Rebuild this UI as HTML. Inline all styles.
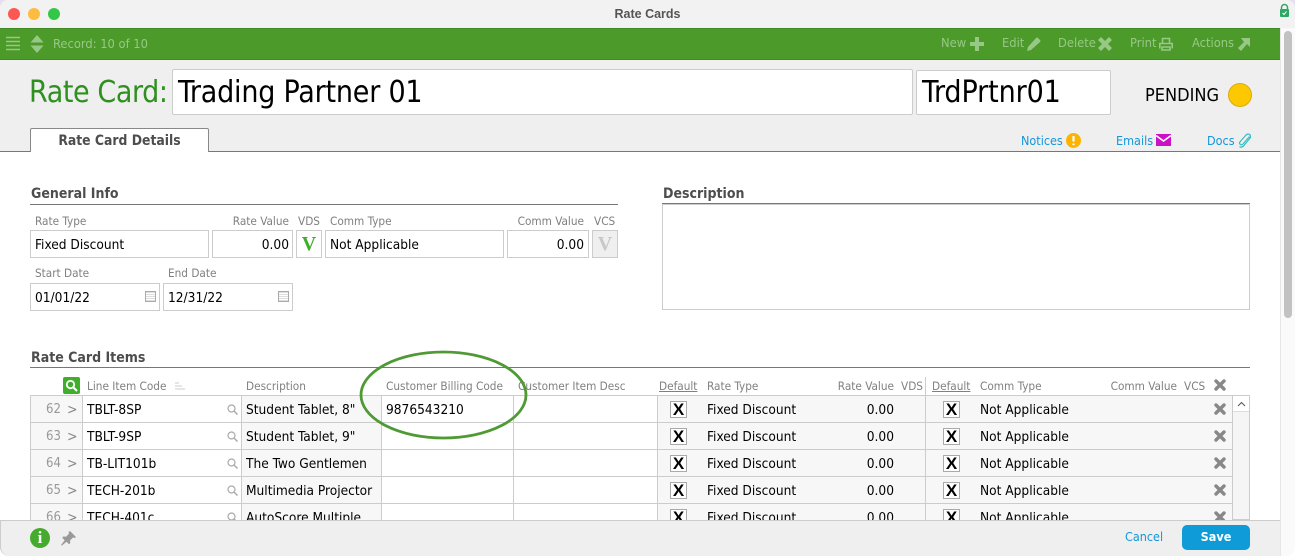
<!DOCTYPE html>
<html><head><meta charset="utf-8">
<style>
html,body{margin:0;padding:0;width:1295px;height:556px;overflow:hidden;background:#fff}
body{position:relative;font-family:"DejaVu Sans Condensed","DejaVu Sans","Liberation Sans",sans-serif;font-stretch:condensed;font-size:13.6px;color:#000}
.a,.t,.b{position:absolute}
.t{white-space:nowrap;line-height:16px}
.b{box-sizing:border-box;border:1px solid #ccc;background:#fff}
.lab{font-size:11.7px;color:#808080}
.bar{font-size:12.8px;color:#98c886}
.blue{font-size:12.5px;color:#1497d9}
.h{font-weight:bold;font-size:14px;color:#4d4d4d}
.hr{position:absolute;height:1px;background:#777}
.r{text-align:right}
.row{position:absolute;left:30px;width:1203px;height:27px;box-sizing:border-box;border-top:1px solid #ccc;background:#f7f7f7}
.row .c{position:absolute;top:0;height:26px;background:#fff}
.row .l{position:absolute;top:0;width:1px;height:26px;background:#ccc}
.row .t{top:6px}
.row .n{color:#999;font-size:13px;left:16px}
.row .g{color:#888;font-size:14px;left:37px}
.cb{position:absolute;top:5px;width:17px;height:17px;box-sizing:border-box;border:1px solid #aaa;background:#fff}
.row .x{width:17px;text-align:center;top:6px;font-family:"Liberation Sans",sans-serif;font-stretch:normal;font-weight:bold;font-size:17px;line-height:16px}
.title{font-size:30px;line-height:38px}
</style></head><body>
<!-- title bar -->
<div class="a" style="left:0;top:0;width:1295px;height:28px;background:#e6e0ee"></div>
<div class="a" style="left:0;top:0;width:1295px;height:28px;background:#f2f2f2;border-radius:8px 8px 0 0"></div>
<div class="a" style="left:8px;top:8px;width:12px;height:12px;border-radius:50%;background:#fc5753"></div>
<div class="a" style="left:28px;top:8px;width:12px;height:12px;border-radius:50%;background:#fdbc40"></div>
<div class="a" style="left:48px;top:8px;width:12px;height:12px;border-radius:50%;background:#33c748"></div>
<div class="t" style="left:0;width:1295px;text-align:center;top:6px;font-family:'Liberation Sans',sans-serif;font-stretch:normal;font-size:12.5px;font-weight:bold;color:#555">Rate Cards</div>
<svg class="a" style="left:1279px;top:3px" width="11" height="15" viewBox="0 0 11 15"><path d="M2.500 7V4.500a3 3 0 0 1 6 0V7" fill="none" stroke="#2fa866" stroke-width="1.500"/><rect x="1" y="6" width="9" height="8" rx="1" fill="#2fa866"/><path d="M3.500 10l1.500 1.500 2.500-3" fill="none" stroke="#fff" stroke-width="1"/></svg>
<!-- toolbar -->
<div class="a" style="left:0;top:28px;width:1280px;height:32px;background:#4c9a2a;border-top:1px solid #3f8a22;border-bottom:1px solid #3f8a22;box-sizing:border-box"></div>
<svg class="a" style="left:6px;top:36px" width="15" height="15"><path d="M0 1.500h14M0 5.500h14M0 9.500h14M0 13.500h14" stroke="#98c886" stroke-width="1.600"/></svg>
<svg class="a" style="left:30px;top:35px" width="14" height="18"><path d="M7 0l6.500 7.500H.5zM7 18l6.500-7.500H.5z" fill="#98c886"/></svg>
<div class="t bar" style="left:53px;top:37px">Record: 10 of 10</div>
<div class="t bar" style="left:941px;top:36px">New</div>
<svg class="a" style="left:970px;top:37px" width="14" height="14"><path d="M5 0h4v5h5v4H9v5H5V9H0V5h5z" fill="#98c886"/></svg>
<div class="t bar" style="left:1002px;top:36px">Edit</div>
<svg class="a" style="left:1027px;top:37px" width="14" height="14"><path d="M0 14l1-4 8-9q1-1 2 0l2 2q1 1 0 2l-9 8z" fill="#98c886"/></svg>
<div class="t bar" style="left:1058px;top:36px">Delete</div>
<svg class="a" style="left:1098px;top:37px" width="14" height="14"><path d="M3 0l4 4 4-4 3 3-4 4 4 4-3 3-4-4-4 4-3-3 4-4-4-4z" fill="#98c886"/></svg>
<div class="t bar" style="left:1130px;top:36px">Print</div>
<svg class="a" style="left:1159px;top:37px" width="14" height="14"><path d="M3.500 6V1.500h7V6M.8 11.500V6.500h12.400v5M3 10h8v3H3z" fill="none" stroke="#98c886" stroke-width="1.600"/></svg>
<div class="t bar" style="left:1192px;top:36px">Actions</div>
<svg class="a" style="left:1237px;top:37px" width="14" height="14"><path d="M4 1h9v9l-3-3-6 7-3-3 6-6z" fill="#98c886"/></svg>
<!-- header -->
<div class="a" style="left:0;top:60px;width:1280px;height:91px;background:#efefef"></div>
<div class="t title" style="left:29px;top:74px;color:#2f9020;letter-spacing:-.4px">Rate Card:</div>
<div class="b" style="left:172px;top:69px;width:741px;height:46px;border-radius:2px"></div>
<div class="t title" style="left:178px;top:74px;letter-spacing:-.2px">Trading Partner 01</div>
<div class="b" style="left:916px;top:70px;width:195px;height:45px;border-radius:2px"></div>
<div class="t title" style="left:922px;top:74px;letter-spacing:-.1px">TrdPrtnr01</div>
<div class="t" style="left:1145px;top:88px;font-size:18px">PENDING</div>
<div class="a" style="left:1228px;top:83px;width:24px;height:24px;box-sizing:border-box;border-radius:50%;background:#fdc800;border:1px solid #d9ac10"></div>
<!-- tabs -->
<div class="a" style="left:30px;top:128px;width:179px;height:24px;box-sizing:border-box;background:#fff;border:1px solid #888;border-bottom:0;border-radius:2px 2px 0 0;z-index:2"></div>
<div class="t" style="left:30px;width:179px;text-align:center;top:133px;font-size:13.8px;font-weight:bold;color:#4d4d4d;z-index:3">Rate Card Details</div>
<div class="hr" style="left:0;top:151px;width:1280px"></div>
<div class="t blue" style="left:1021px;top:133px">Notices</div>
<svg class="a" style="left:1066px;top:133px" width="15" height="15"><circle cx="7.500" cy="7.500" r="7.500" fill="#fdb300"/><path d="M7.500 3v5.500M7.500 10.500v1.600" stroke="#fff" stroke-width="2.200"/></svg>
<div class="t blue" style="left:1116px;top:133px">Emails</div>
<svg class="a" style="left:1156px;top:134px" width="15" height="12"><rect width="15" height="12" fill="#cc10c8"/><path d="M0 1.500L7.500 7 15 1.500" fill="none" stroke="#fff" stroke-width="1.600"/></svg>
<div class="t blue" style="left:1207px;top:133px">Docs</div>
<svg class="a" style="left:1238px;top:133px" width="13" height="15" viewBox="0 0 13 15"><path d="M11.500 3.500L5 11q-1.500 1.500-2.800.4t0-2.800L8 2q2-1.800 3.700-.4t.2 3.700L5.500 13q-2.200 2-4 .6" fill="none" stroke="#35bdc0" stroke-width="1.200"/></svg>
<!-- general -->
<div class="t h" style="left:31px;top:186px">General Info</div>
<div class="hr" style="left:30px;top:204px;width:588px"></div>
<div class="t lab" style="left:35px;top:213px">Rate Type</div>
<div class="t lab r" style="left:212px;width:77px;top:213px">Rate Value</div>
<div class="t lab" style="left:298px;top:213px">VDS</div>
<div class="t lab" style="left:330px;top:213px">Comm Type</div>
<div class="t lab r" style="left:507px;width:77px;top:213px">Comm Value</div>
<div class="t lab" style="left:594px;top:213px">VCS</div>
<div class="b" style="left:30px;top:230px;width:179px;height:28px"></div>
<div class="t" style="left:35px;top:237px">Fixed Discount</div>
<div class="b" style="left:212px;top:230px;width:81px;height:28px"></div>
<div class="t r" style="left:212px;width:77px;top:237px">0.00</div>
<div class="b" style="left:296px;top:230px;width:26px;height:28px"></div>
<div class="t" style="left:296px;width:26px;text-align:center;top:234px;font-family:'Liberation Serif',serif;font-stretch:normal;font-weight:bold;font-size:20px;line-height:20px;color:#3fae2a">V</div>
<div class="b" style="left:325px;top:230px;width:179px;height:28px"></div>
<div class="t" style="left:330px;top:237px">Not Applicable</div>
<div class="b" style="left:507px;top:230px;width:82px;height:28px"></div>
<div class="t r" style="left:507px;width:77px;top:237px">0.00</div>
<div class="b" style="left:592px;top:230px;width:26px;height:28px;background:#efefef"></div>
<div class="t" style="left:592px;width:26px;text-align:center;top:234px;font-family:'Liberation Serif',serif;font-stretch:normal;font-weight:bold;font-size:20px;line-height:20px;color:#c8c8c8">V</div>
<div class="t lab" style="left:35px;top:265px">Start Date</div>
<div class="t lab" style="left:168px;top:265px">End Date</div>
<div class="b" style="left:30px;top:283px;width:130px;height:28px"></div>
<div class="t" style="left:35px;top:290px">01/01/22</div>
<div class="a" style="left:145px;top:291px;width:9px;height:9px;border:1px solid #aaa;background:repeating-linear-gradient(0deg,#ddd 0 1px,#fff 1px 2px)"></div>
<div class="b" style="left:163px;top:283px;width:130px;height:28px"></div>
<div class="t" style="left:168px;top:290px">12/31/22</div>
<div class="a" style="left:278px;top:291px;width:9px;height:9px;border:1px solid #aaa;background:repeating-linear-gradient(0deg,#ddd 0 1px,#fff 1px 2px)"></div>
<!-- description -->
<div class="t h" style="left:663px;top:186px">Description</div>
<div class="b" style="left:662px;top:204px;width:588px;height:106px;border-color:#ccc"></div>
<div class="hr" style="left:662px;top:203px;width:588px"></div>
<!-- items -->
<div class="t h" style="left:31px;top:350px">Rate Card Items</div>
<div class="hr" style="left:30px;top:367px;width:1220px"></div>
<div class="a" style="left:63px;top:377px;width:17px;height:17px;border-radius:2px;background:#3fae2a"></div>
<svg class="a" style="left:65px;top:379px" width="13" height="13"><circle cx="5.500" cy="5.500" r="3.700" fill="none" stroke="#fff" stroke-width="1.800"/><path d="M8.500 8.500l3.500 3.500" stroke="#fff" stroke-width="2"/></svg>
<div class="t lab" style="left:87px;top:378px">Line Item Code</div>
<svg class="a" style="left:175px;top:382px" width="11" height="9"><path d="M0 1h4M0 4h7M0 7h10" stroke="#ccc" stroke-width="1"/></svg>
<div class="t lab" style="left:246px;top:378px">Description</div>
<div class="t lab" style="left:386px;top:378px">Customer Billing Code</div>
<div class="t lab" style="left:518px;top:378px">Customer Item Desc</div>
<div class="t lab" style="left:659px;top:378px;text-decoration:underline">Default</div>
<div class="t lab" style="left:707px;top:378px">Rate Type</div>
<div class="t lab r" style="left:800px;width:94px;top:378px">Rate Value</div>
<div class="t lab" style="left:901px;top:378px">VDS</div>
<div class="a" style="left:925px;top:377px;width:1px;height:19px;background:#ccc"></div>
<div class="t lab" style="left:932px;top:378px;text-decoration:underline">Default</div>
<div class="t lab" style="left:980px;top:378px">Comm Type</div>
<div class="t lab r" style="left:1080px;width:97px;top:378px">Comm Value</div>
<div class="t lab" style="left:1184px;top:378px">VCS</div>
<svg class="a" style="left:1214px;top:379px" width="12" height="12"><path d="M2 2l8 8M10 2l-8 8" stroke="#888" stroke-width="3.400" stroke-linecap="round"/></svg>

<div class="row" style="top:395px"><div class="c" style="left:52px;width:159px"></div><div class="c" style="left:351px;width:276px"></div><div class="l" style="left:0"></div><div class="l" style="left:52px"></div><div class="l" style="left:211px"></div><div class="l" style="left:351px"></div><div class="l" style="left:483px"></div><div class="l" style="left:627px"></div><div class="l" style="left:895px"></div>
<div class="t n">62</div><div class="t g">&gt;</div><div class="t" style="left:57px">TBLT-8SP</div><svg class="a" style="left:197px;top:8px" width="11" height="11"><circle cx="4.500" cy="4.500" r="3.500" fill="none" stroke="#aaa" stroke-width="1.200"/><path d="M7 7l3.500 3.500" stroke="#aaa" stroke-width="1.500"/></svg><div class="t" style="left:216px">Student Tablet, 8"</div><div class="t" style="left:356px">9876543210</div>
<div class="cb" style="left:640px"></div><div class="t x" style="left:640px">X</div><div class="t" style="left:677px">Fixed Discount</div><div class="t r" style="left:790px;width:74px">0.00</div>
<div class="cb" style="left:913px"></div><div class="t x" style="left:913px">X</div><div class="t" style="left:950px">Not Applicable</div><svg class="a" style="left:1184px;top:7px" width="12" height="12"><path d="M2 2l8 8M10 2l-8 8" stroke="#888" stroke-width="3.400" stroke-linecap="round"/></svg></div>

<div class="row" style="top:422px"><div class="c" style="left:52px;width:159px"></div><div class="c" style="left:351px;width:276px"></div><div class="l" style="left:0"></div><div class="l" style="left:52px"></div><div class="l" style="left:211px"></div><div class="l" style="left:351px"></div><div class="l" style="left:483px"></div><div class="l" style="left:627px"></div><div class="l" style="left:895px"></div>
<div class="t n">63</div><div class="t g">&gt;</div><div class="t" style="left:57px">TBLT-9SP</div><svg class="a" style="left:197px;top:8px" width="11" height="11"><circle cx="4.500" cy="4.500" r="3.500" fill="none" stroke="#aaa" stroke-width="1.200"/><path d="M7 7l3.500 3.500" stroke="#aaa" stroke-width="1.500"/></svg><div class="t" style="left:216px">Student Tablet, 9"</div>
<div class="cb" style="left:640px"></div><div class="t x" style="left:640px">X</div><div class="t" style="left:677px">Fixed Discount</div><div class="t r" style="left:790px;width:74px">0.00</div>
<div class="cb" style="left:913px"></div><div class="t x" style="left:913px">X</div><div class="t" style="left:950px">Not Applicable</div><svg class="a" style="left:1184px;top:7px" width="12" height="12"><path d="M2 2l8 8M10 2l-8 8" stroke="#888" stroke-width="3.400" stroke-linecap="round"/></svg></div>

<div class="row" style="top:449px"><div class="c" style="left:52px;width:159px"></div><div class="c" style="left:351px;width:276px"></div><div class="l" style="left:0"></div><div class="l" style="left:52px"></div><div class="l" style="left:211px"></div><div class="l" style="left:351px"></div><div class="l" style="left:483px"></div><div class="l" style="left:627px"></div><div class="l" style="left:895px"></div>
<div class="t n">64</div><div class="t g">&gt;</div><div class="t" style="left:57px">TB-LIT101b</div><svg class="a" style="left:197px;top:8px" width="11" height="11"><circle cx="4.500" cy="4.500" r="3.500" fill="none" stroke="#aaa" stroke-width="1.200"/><path d="M7 7l3.500 3.500" stroke="#aaa" stroke-width="1.500"/></svg><div class="t" style="left:216px">The Two Gentlemen</div>
<div class="cb" style="left:640px"></div><div class="t x" style="left:640px">X</div><div class="t" style="left:677px">Fixed Discount</div><div class="t r" style="left:790px;width:74px">0.00</div>
<div class="cb" style="left:913px"></div><div class="t x" style="left:913px">X</div><div class="t" style="left:950px">Not Applicable</div><svg class="a" style="left:1184px;top:7px" width="12" height="12"><path d="M2 2l8 8M10 2l-8 8" stroke="#888" stroke-width="3.400" stroke-linecap="round"/></svg></div>

<div class="row" style="top:476px"><div class="c" style="left:52px;width:159px"></div><div class="c" style="left:351px;width:276px"></div><div class="l" style="left:0"></div><div class="l" style="left:52px"></div><div class="l" style="left:211px"></div><div class="l" style="left:351px"></div><div class="l" style="left:483px"></div><div class="l" style="left:627px"></div><div class="l" style="left:895px"></div>
<div class="t n">65</div><div class="t g">&gt;</div><div class="t" style="left:57px">TECH-201b</div><svg class="a" style="left:197px;top:8px" width="11" height="11"><circle cx="4.500" cy="4.500" r="3.500" fill="none" stroke="#aaa" stroke-width="1.200"/><path d="M7 7l3.500 3.500" stroke="#aaa" stroke-width="1.500"/></svg><div class="t" style="left:216px">Multimedia Projector</div>
<div class="cb" style="left:640px"></div><div class="t x" style="left:640px">X</div><div class="t" style="left:677px">Fixed Discount</div><div class="t r" style="left:790px;width:74px">0.00</div>
<div class="cb" style="left:913px"></div><div class="t x" style="left:913px">X</div><div class="t" style="left:950px">Not Applicable</div><svg class="a" style="left:1184px;top:7px" width="12" height="12"><path d="M2 2l8 8M10 2l-8 8" stroke="#888" stroke-width="3.400" stroke-linecap="round"/></svg></div>

<div class="row" style="top:503px"><div class="c" style="left:52px;width:159px"></div><div class="c" style="left:351px;width:276px"></div><div class="l" style="left:0"></div><div class="l" style="left:52px"></div><div class="l" style="left:211px"></div><div class="l" style="left:351px"></div><div class="l" style="left:483px"></div><div class="l" style="left:627px"></div><div class="l" style="left:895px"></div>
<div class="t n">66</div><div class="t g">&gt;</div><div class="t" style="left:57px">TECH-401c</div><svg class="a" style="left:197px;top:8px" width="11" height="11"><circle cx="4.500" cy="4.500" r="3.500" fill="none" stroke="#aaa" stroke-width="1.200"/><path d="M7 7l3.500 3.500" stroke="#aaa" stroke-width="1.500"/></svg><div class="t" style="left:216px">AutoScore Multiple</div>
<div class="cb" style="left:640px"></div><div class="t x" style="left:640px">X</div><div class="t" style="left:677px">Fixed Discount</div><div class="t r" style="left:790px;width:74px">0.00</div>
<div class="cb" style="left:913px"></div><div class="t x" style="left:913px">X</div><div class="t" style="left:950px">Not Applicable</div><svg class="a" style="left:1184px;top:7px" width="12" height="12"><path d="M2 2l8 8M10 2l-8 8" stroke="#888" stroke-width="3.400" stroke-linecap="round"/></svg></div>

<!-- inner scrollbar -->
<div class="a" style="left:1232px;top:395px;width:18px;height:125px;background:#f5f5f5;border:1px solid #ccc;box-sizing:border-box"></div>
<div class="a" style="left:1233px;top:396px;width:16px;height:16px;background:#fff;border-bottom:1px solid #ddd;box-sizing:border-box"></div>
<svg class="a" style="left:1237px;top:401px" width="9" height="6"><path d="M1 5l3.500-3.500L8 5" fill="none" stroke="#555" stroke-width="1"/></svg>
<!-- ellipse -->
<svg class="a" style="left:355px;top:345px;z-index:5" width="180" height="100"><ellipse cx="88.500" cy="50" rx="82.500" ry="43" fill="none" stroke="#4f9a34" stroke-width="2.800"/></svg>
<!-- footer -->
<div class="a" style="left:0;top:520px;width:1281px;height:36px;background:#efefef;border-top:1px solid #ccc;border-left:1px solid #ccc;border-radius:0 0 0 9px;box-sizing:border-box;z-index:6"></div>
<div class="a" style="left:30px;top:528px;width:20px;height:20px;border-radius:50%;background:#45ab2d;z-index:7"></div>
<div class="t" style="left:30px;width:20px;text-align:center;top:530px;font-family:'Liberation Serif',serif;font-stretch:normal;font-weight:bold;font-size:17px;color:#fff;z-index:8">i</div>
<svg class="a" style="left:61px;top:531px;z-index:7" width="15" height="15"><path d="M9 0l6 6-1.500 1-1.500-.5-3 3 .3 2.500-1.300 1.300-2.500-2.500L1 14.500 0 14l3.700-4.800L1.200 6.700 2.500 5.400l2.500.3 3-3L7.500 1.200z" fill="#999"/></svg>
<div class="t" style="left:1125px;top:529px;font-size:12.500px;color:#1497d9;z-index:7">Cancel</div>
<div class="a" style="left:1182px;top:525px;width:68px;height:25px;border-radius:5px;background:#0f9ad8;z-index:7"></div>
<div class="t" style="left:1182px;width:68px;text-align:center;top:529px;font-size:12.500px;font-weight:bold;color:#fff;z-index:8">Save</div>
<!-- page scrollbar -->
<div class="a" style="left:1280px;top:28px;width:15px;height:528px;background:#fafafa;border-left:1px solid #e6e6e6;border-radius:0 0 9px 0;box-sizing:border-box;z-index:6"></div>
<div class="a" style="left:1284px;top:31px;width:8px;height:287px;border-radius:4px;background:#c2c2c2;z-index:7"></div>
</body></html>
